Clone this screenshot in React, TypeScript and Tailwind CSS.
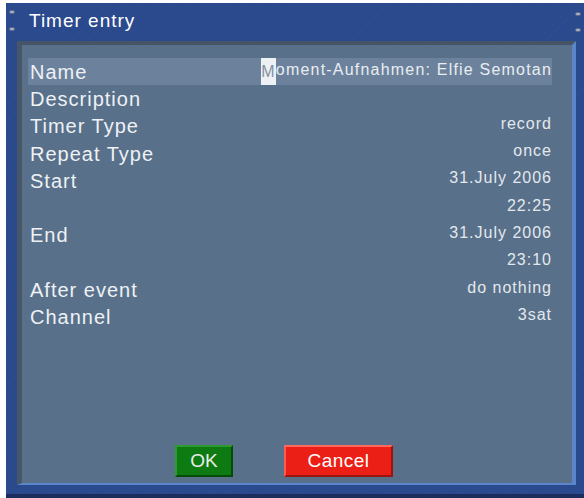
const rows: { label: string; value?: string }[] = [
  { label: "Name" },
  { label: "Description", value: "" },
  { label: "Timer Type", value: "record" },
  { label: "Repeat Type", value: "once" },
  { label: "Start", value: "31.July 2006" },
  { label: "", value: "22:25" },
  { label: "End", value: "31.July 2006" },
  { label: "", value: "23:10" },
  { label: "After event", value: "do nothing" },
  { label: "Channel", value: "3sat" },
];

const Screw = ({ className }: { className: string }) => (
  <span className={`absolute w-[6px] h-[4px] rounded-full bg-[#a9b3c4] border border-[#5b6a86] ${className}`} />
);

export default function App() {
  return (
    <div className="w-[584px] h-[498px] bg-white pl-[6px] pt-[3px] font-[family-name:'Liberation_Sans',Arial,sans-serif]">
      <div className="relative h-full flex flex-col bg-[#2b4b8f] bg-[repeating-linear-gradient(135deg,#2d4d92_0px,#2a498c_2px,#2c4b8f_4px,#29478a_6px)] border-b-[4px] border-[#1b2d5c] pl-[11px] pr-[8px] pb-[9px]">
        <Screw className="left-[3px] top-[7px]" />
        <Screw className="left-[3px] top-[24px]" />
        <Screw className="right-[3px] top-[9px]" />
        <Screw className="right-[3px] top-[25px]" />

        {/* Title */}
        <div className="h-[38px] shrink-0 flex items-center pl-[12px] pb-[2px] text-[19px] tracking-[1px] text-white">
          Timer entry
        </div>

        {/* Panel */}
        <div className="flex-1 flex flex-col bg-[#587089] border-t-[4px] border-l-[5px] border-t-[#465468] border-l-[#475668] border-r-[4px] border-r-[#5b86cc] border-b-[2px] border-b-[#5b86cc] pt-[13px]">
          <div className="flex flex-col ml-[6px] mr-[20px]">
            {rows.map((r, i) => (
              <div
                key={i}
                className={`h-[27.3px] flex items-center justify-between ${i === 0 ? "bg-[#6c829c]" : ""}`}
              >
                <span className="pl-[2px] text-[20px] tracking-[1px] text-[#eef1f5] leading-none">{r.label}</span>
                {i === 0 ? (
                  <span className="h-full flex items-center text-[16px] tracking-[1.2px] text-[#e9edf2]">
                    <span className="h-full flex items-center bg-[#eef1f4] text-[#7f90a6]">M</span>
                    <span className="pb-[3px]">oment-Aufnahmen: Elfie Semotan</span>
                  </span>
                ) : (
                  <span className="pb-[5px] text-[16px] tracking-[1px] text-[#e4e8ee] leading-none">{r.value}</span>
                )}
              </div>
            ))}
          </div>

          <div className="flex-1" />

          <div className="flex items-center pl-[153px] gap-[51px] mb-[6px]">
            <button className="w-[58px] h-[32px] flex items-center justify-center bg-[#0e7a12] border-[2px] border-t-[#2f9a30] border-l-[#2f9a30] border-r-[#064a08] border-b-[#064a08] text-[19px] text-[#e8eee8]">
              OK
            </button>
            <button className="w-[109px] h-[32px] flex items-center justify-center bg-[#ec1f17] border-[2px] border-t-[#ff6a5e] border-l-[#ff5c50] border-r-[#9a1410] border-b-[#9a1410] text-[19px] tracking-[0.5px] text-white">
              Cancel
            </button>
          </div>
        </div>
      </div>
    </div>
  );
}
